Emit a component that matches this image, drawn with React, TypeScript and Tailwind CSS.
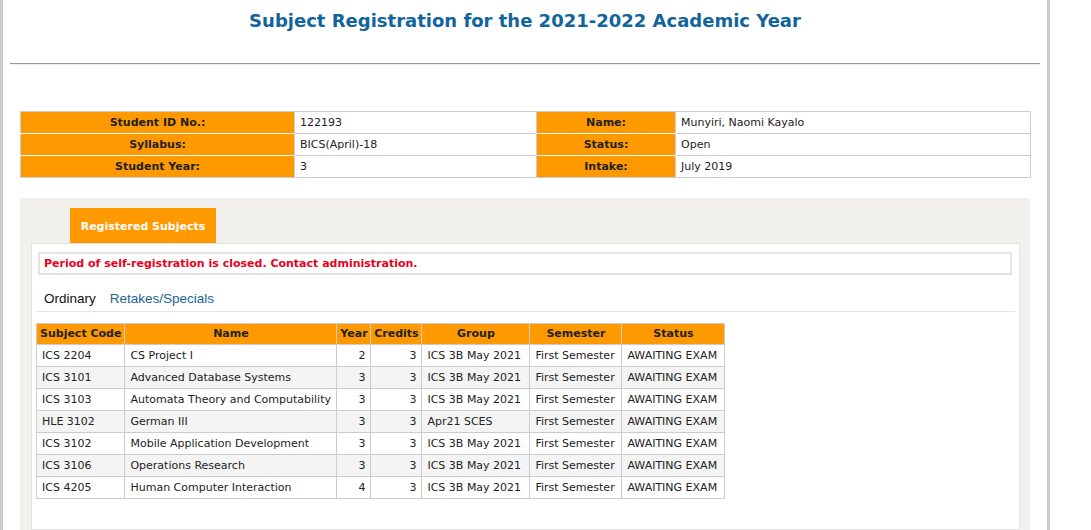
import React from "react";

const rows = [
  ["ICS 2204", "CS Project I", "2", "3", "ICS 3B May 2021", "First Semester", "AWAITING EXAM"],
  ["ICS 3101", "Advanced Database Systems", "3", "3", "ICS 3B May 2021", "First Semester", "AWAITING EXAM"],
  ["ICS 3103", "Automata Theory and Computability", "3", "3", "ICS 3B May 2021", "First Semester", "AWAITING EXAM"],
  ["HLE 3102", "German III", "3", "3", "Apr21 SCES", "First Semester", "AWAITING EXAM"],
  ["ICS 3102", "Mobile Application Development", "3", "3", "ICS 3B May 2021", "First Semester", "AWAITING EXAM"],
  ["ICS 3106", "Operations Research", "3", "3", "ICS 3B May 2021", "First Semester", "AWAITING EXAM"],
  ["ICS 4205", "Human Computer Interaction", "4", "3", "ICS 3B May 2021", "First Semester", "AWAITING EXAM"],
];

const info = [
  ["Student ID No.:", "122193", "Name:", "Munyiri, Naomi Kayalo"],
  ["Syllabus:", "BICS(April)-18", "Status:", "Open"],
  ["Student Year:", "3", "Intake:", "July 2019"],
];

export default function App() {
  const verdana = { fontFamily: '"DejaVu Sans", Verdana, sans-serif' };
  return (
    <div className="bg-white min-h-[530px]" style={verdana}>
      <div className="w-[1050px] min-h-[530px] border-x-[3px] border-[#cccccc] bg-white flex flex-col">
        <h1 className="text-[18px] font-bold text-[#12649c] text-center leading-[22px] pt-[10px]">
          Subject Registration for the 2021-2022 Academic Year
        </h1>
        <div className="mx-[7px] mt-[31px] border-t border-[#9a9a9a] border-b border-b-[#eeeeee]" />
        <div className="px-[17px] mt-[46px]">
          <table className="w-[1010px] border-collapse table-fixed text-[11px] text-[#222]">
            <colgroup>
              <col className="w-[274px]" />
              <col className="w-[242px]" />
              <col className="w-[139px]" />
              <col className="w-[355px]" />
            </colgroup>
            <tbody>
              {info.map((r, i) => (
                <tr key={i} className="h-[22px]">
                  <td className={`bg-[#ff9900] font-bold text-center border border-[#cccccc] ${i < 2 ? "border-b-white" : ""} p-0 pt-[2px]`}>{r[0]}</td>
                  <td className="border border-[#cccccc] px-[5px] py-0 pt-[2px]">{r[1]}</td>
                  <td className={`bg-[#ff9900] font-bold text-center border border-[#cccccc] ${i < 2 ? "border-b-white" : ""} p-0 pt-[2px]`}>{r[2]}</td>
                  <td className="border border-[#cccccc] px-[5px] py-0 pt-[2px]">{r[3]}</td>
                </tr>
              ))}
            </tbody>
          </table>
        </div>
        <div className="mx-[17px] mt-[20px] flex-1 bg-[#f1f0ec] pt-[10px] pl-[11px] pr-[10px] flex flex-col">
          <div className="flex pl-[39px]">
            <div className="w-[146px] h-[35px] bg-[#ff9900] text-white font-bold text-[11px] flex items-center justify-center pt-[3px]">
              Registered Subjects
            </div>
          </div>
          <div className="flex-1 bg-white border border-[#e3e3e3] px-[4px] pt-[8px] pb-[30px]">
            <div className="border-2 border-[#e3e3e3] h-[23px] flex items-center pl-[4px] pt-[1px] text-[11px] font-bold text-[#e8001c] ml-[2px] mr-[3px]">
              Period of self-registration is closed. Contact administration.
            </div>
            <div className="mt-[16px] border-b border-[#e5e5e5] flex gap-[14px] pl-[8px] pb-[4px] text-[13.5px] leading-[16px]" style={{ fontFamily: '"Liberation Sans", Arial, sans-serif' }}>
              <span className="text-[#111]">Ordinary</span>
              <span className="text-[#1a6496]">Retakes/Specials</span>
            </div>
            <table className="mt-[11px] border-collapse table-fixed text-[11px] text-[#222]">
              <colgroup>
                <col className="w-[88px]" />
                <col className="w-[212px]" />
                <col className="w-[34px]" />
                <col className="w-[51px]" />
                <col className="w-[108px]" />
                <col className="w-[92px]" />
                <col className="w-[103px]" />
              </colgroup>
              <thead>
                <tr className="h-[21px] bg-[#ff9900] font-bold">
                  <th className="border border-[#cccccc] px-[3px] pt-[1px] text-left whitespace-nowrap">Subject Code</th>
                  <th className="border border-[#cccccc] pt-[1px] text-center">Name</th>
                  <th className="border border-[#cccccc] px-[2px] pt-[1px] text-center">Year</th>
                  <th className="border border-[#cccccc] px-[2px] pt-[1px] text-center">Credits</th>
                  <th className="border border-[#cccccc] pt-[1px] text-center">Group</th>
                  <th className="border border-[#cccccc] pt-[1px] text-center">Semester</th>
                  <th className="border border-[#cccccc] pt-[1px] text-center">Status</th>
                </tr>
              </thead>
              <tbody>
                {rows.map((r, i) => (
                  <tr key={i} className={`h-[22px] ${i % 2 === 1 ? "bg-[#f4f4f4]" : "bg-white"}`}>
                    <td className="border border-[#cccccc] px-[5px] pt-[2px] whitespace-nowrap">{r[0]}</td>
                    <td className="border border-[#cccccc] px-[5px] pt-[2px] whitespace-nowrap">{r[1]}</td>
                    <td className="border border-[#cccccc] px-[5px] pt-[2px] text-right">{r[2]}</td>
                    <td className="border border-[#cccccc] px-[5px] pt-[2px] text-right">{r[3]}</td>
                    <td className="border border-[#cccccc] px-[5px] pt-[2px] whitespace-nowrap">{r[4]}</td>
                    <td className="border border-[#cccccc] px-[5px] pt-[2px] whitespace-nowrap">{r[5]}</td>
                    <td className="border border-[#cccccc] px-[5px] pt-[2px] whitespace-nowrap">{r[6]}</td>
                  </tr>
                ))}
              </tbody>
            </table>
          </div>
        </div>
      </div>
    </div>
  );
}
